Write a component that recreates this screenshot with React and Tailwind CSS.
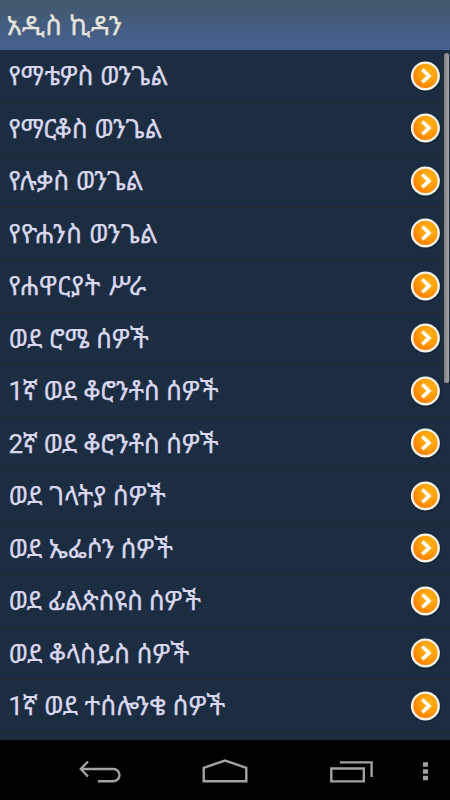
const books = [
  { name: 'የማቴዎስ ወንጌል', tracking: 'tracking-[0px]' },
  { name: 'የማርቆስ ወንጌል', tracking: 'tracking-[0px]' },
  { name: 'የሉቃስ ወንጌል', tracking: 'tracking-[-0.1px]' },
  { name: 'የዮሐንስ ወንጌል', tracking: 'tracking-[0.2px]' },
  { name: 'የሐዋርያት ሥራ', tracking: 'tracking-[0.8px]' },
  { name: 'ወደ ሮሜ ሰዎች', tracking: 'tracking-[0px]' },
  { name: '1ኛ ወደ ቆሮንቶስ ሰዎች', tracking: 'tracking-[-0.17px]' },
  { name: '2ኛ ወደ ቆሮንቶስ ሰዎች', tracking: 'tracking-[-0.17px]' },
  { name: 'ወደ ገላትያ ሰዎች', tracking: 'tracking-[0.1px]' },
  { name: 'ወደ ኤፌሶን ሰዎች', tracking: 'tracking-[-0.15px]' },
  { name: 'ወደ ፊልጵስዩስ ሰዎች', tracking: 'tracking-[-0.35px]' },
  { name: 'ወደ ቆላስይስ ሰዎች', tracking: 'tracking-[0px]' },
  { name: '1ኛ ወደ ተሰሎንቄ ሰዎች', tracking: 'tracking-[0px]' },
];

function ArrowBadge() {
  return (
    <svg viewBox="0 0 32 32" className="h-8 w-8 shrink-0">
      <defs>
        <radialGradient id="orange" cx="0.62" cy="0.36" r="0.72">
          <stop offset="0" stopColor="#ffb41a" />
          <stop offset="0.5" stopColor="#ffa00a" />
          <stop offset="1" stopColor="#ff7800" />
        </radialGradient>
      </defs>
      <circle cx="17" cy="17" r="15" fill="#0b1626" opacity="0.5" />
      <circle cx="16.4" cy="15.9" r="14.5" fill="#fbf3e8" />
      <circle cx="16.4" cy="15.9" r="12.1" fill="url(#orange)" />
      <path d="M13.3 9.5 L20 15.9 L13.3 22.3" fill="none" stroke="#fff" strokeWidth="3.6" />
    </svg>
  );
}

function NavBar() {
  return (
    <nav className="h-[60px] bg-black">
      <svg viewBox="0 0 450 60" className="h-full w-full" fill="none" stroke="#a2a2a2" strokeWidth="2.4">
        {/* back */}
        <path d="M81 29 H113.5 a6 6.1 0 0 1 0 12.2 H98 M88 21.5 L80.8 29 L88 36.5" />
        {/* home */}
        <path d="M203.7 41.3 V27.8 L225 20.5 L246.3 27.8 V41.3 Z" />
        {/* recent apps */}
        <path d="M331.3 28.5 H363.8 V41.4 H331.3 Z M340 22.4 H371.6 V37" />
        {/* menu */}
        <path d="M423 24.5 h5 M423 31.5 h5 M423 38 h5" strokeWidth="4.4" />
      </svg>
    </nav>
  );
}

export default function App() {
  return (
    <div className="flex h-[800px] w-[450px] flex-col overflow-hidden bg-[#1c2d41] font-['Roboto','Noto_Sans_Ethiopic','Noto_Sans',sans-serif]">
      <header className="flex h-[50px] shrink-0 items-center bg-linear-to-b from-[#43586a] to-[#476194] px-[6.5px] pt-[3px]">
        <h1 className="text-[27px] leading-none tracking-[0.4px] text-[#e4e2dd] [-webkit-text-stroke:0.25px_#e4e2dd]">
          አዲስ ኪዳን
        </h1>
      </header>

      <main className="relative min-h-0 flex-1 overflow-hidden">
        <ul>
          {books.map((book) => (
            <li
              key={book.name}
              className="flex h-[52.5px] items-center justify-between border-b border-[#24282c] pr-[9px] pl-[8.5px]"
            >
              <span
                className={`pt-px text-[26px] leading-none whitespace-nowrap text-[#d8d7ee] [-webkit-text-stroke:0.25px_#d8d7ee] ${book.tracking}`}
              >
                {book.name}
              </span>
              <ArrowBadge />
            </li>
          ))}
        </ul>
        {/* scroll thumb */}
        <div className="absolute top-[3px] right-[1px] h-[330px] w-[5px] rounded-full bg-linear-to-r from-[#7e7e7e] to-[#a6a6a6]" />
      </main>

      <NavBar />
    </div>
  );
}
